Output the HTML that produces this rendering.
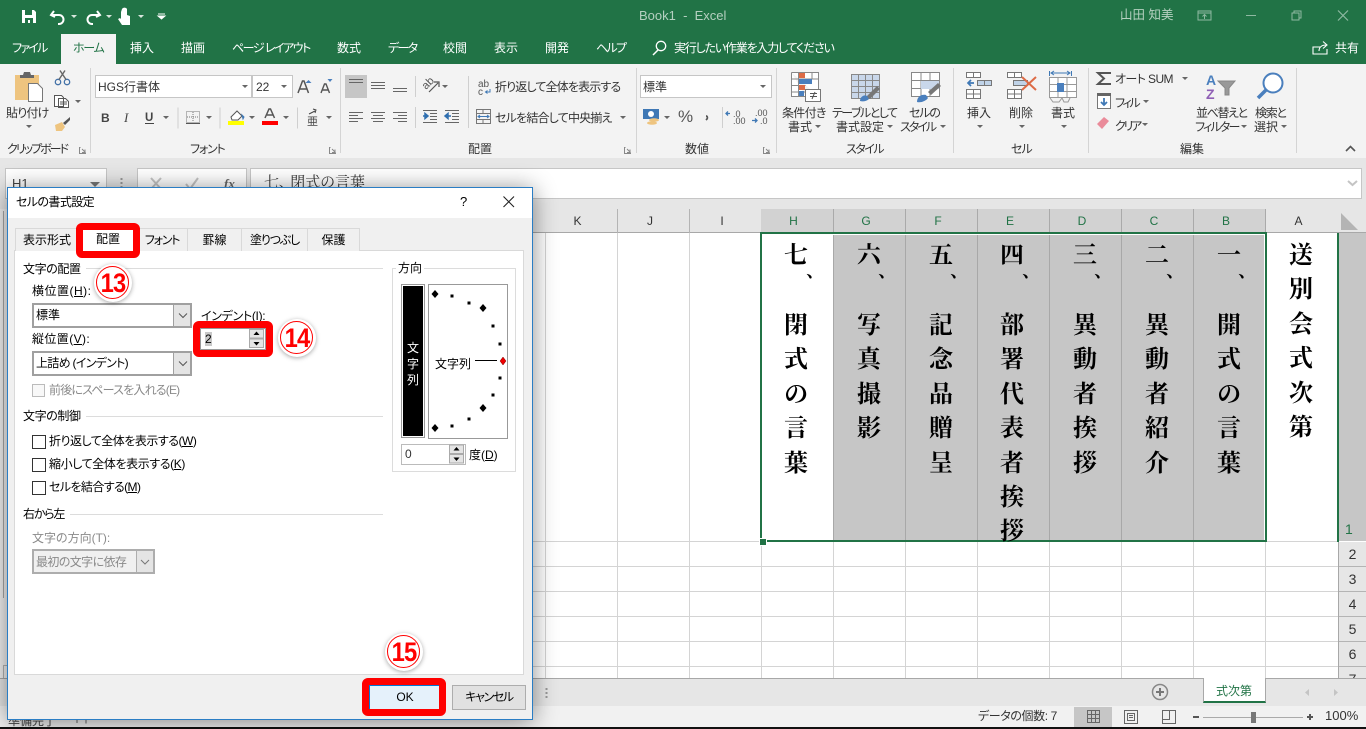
<!DOCTYPE html>
<html lang="ja"><head><meta charset="utf-8"><title>Book1 - Excel</title>
<style>
html,body{margin:0;padding:0;width:1366px;height:729px;overflow:hidden;background:#fff}
body{position:relative;font-family:"Liberation Sans","Noto Sans CJK JP",sans-serif;font-size:12px;color:#333;font-feature-settings:"palt"}
.a{position:absolute}
.t{position:absolute;white-space:nowrap;height:16px;line-height:16px;font-size:12px}
.w{color:#fff}.f{color:#b5d0c0}
.c{position:absolute;width:34px;text-align:center;font-family:"Noto Serif CJK SC","Noto Serif CJK JP",serif;font-weight:700;font-size:24px;line-height:34.4px;color:#000;white-space:pre}
.k{font-size:18px;top:253px}
.hd{position:absolute;top:209px;height:24px;line-height:24px;text-align:center;font-size:12px;color:#333;border-right:1px solid #b4b4b4;box-sizing:border-box;padding-right:7px}
.s{background:#d2d2d2;color:#217346;border-right-color:#aaa}
.rh{position:absolute;left:1339px;width:27px;height:24px;line-height:24px;text-align:center;font-size:14px;color:#333;background:#e6e6e6;border-bottom:1px solid #b4b4b4}
.d{color:#000}
.g{color:#8a8a8a}
.tab{position:absolute;top:228px;height:23px;line-height:23px;text-align:center;background:#f0f0f0;border:1px solid #d9d9d9;border-bottom:0;box-sizing:border-box;color:#000}
.ln{position:absolute;height:1px;background:#dcdcdc}
.sel{position:absolute;box-sizing:border-box;border:2px solid #a0a0a0;background:#fff}
.sb{position:absolute;top:0;right:0;bottom:0;width:16px;background:#e4e4e4;border-left:1px solid #a0a0a0}
.cb{position:absolute;width:12px;height:12px;border:1px solid #333;background:#fff}
.red{position:absolute;box-sizing:border-box;border:7px solid #f00;border-radius:6px}
.num{position:absolute;width:38px;height:38px;border-radius:50%;background:#fff;box-shadow:0 1px 5px rgba(0,0,0,.35)}
.num i{position:absolute;left:2px;top:2px;width:31px;height:31px;border:1.500px solid #f00;border-radius:50%;background:#fff;display:block}
.num b{position:absolute;left:0;top:0;width:38px;height:38px;line-height:38px;text-align:center;font-size:27px;color:#f00;font-style:normal;transform:scaleX(.88);letter-spacing:-1px}
</style></head><body>

<!-- Title + tabs -->
<div class="a" style="left:0;top:0;width:1366px;height:64px;background:#217346"></div>
<div class="a" style="left:61px;top:34px;width:55px;height:30px;background:#f3f3f3"></div>
<div class="a" style="left:0;top:64px;width:1366px;height:94px;background:#f3f3f3;border-bottom:1px solid #cfcfcf"></div>
<div class="a" style="left:0;top:158px;width:1366px;height:51px;background:#e6e6e6"></div>

<span class="t f" style="left:639px;top:8px;font-size:13px">Book1 &nbsp;-&nbsp; Excel</span>
<span class="t f" style="left:1120px;top:7px;font-size:12.500px">山田 知美</span>

<span class="t w" style="left:12px;top:40px;letter-spacing:-1.750px">ファイル</span>
<span class="t" style="left:73px;top:40px;color:#217346;letter-spacing:-1.300px">ホーム</span>
<span class="t w" style="left:130px;top:40px">挿入</span>
<span class="t w" style="left:181px;top:40px">描画</span>
<span class="t w" style="left:232px;top:40px;letter-spacing:-1.500px">ページ レイアウト</span>
<span class="t w" style="left:337px;top:40px">数式</span>
<span class="t w" style="left:388px;top:40px;letter-spacing:-1.700px">データ</span>
<span class="t w" style="left:443px;top:40px">校閲</span>
<span class="t w" style="left:494px;top:40px">表示</span>
<span class="t w" style="left:545px;top:40px">開発</span>
<span class="t w" style="left:596px;top:40px;letter-spacing:-1.700px">ヘルプ</span>
<span class="t w" style="left:674px;top:40px;letter-spacing:-1.200px">実行したい作業を入力してください</span>
<span class="t w" style="left:1335px;top:40px">共有</span>

<!-- Ribbon text -->
<span class="t" style="left:6px;top:105px;letter-spacing:-.800px">貼り付け</span>
<span class="t" style="left:7px;top:141px;letter-spacing:-2px">クリップボード</span>
<span class="t" style="left:190px;top:141px;letter-spacing:-1.200px">フォント</span>
<span class="t" style="left:468px;top:141px">配置</span>
<span class="t" style="left:685px;top:141px">数値</span>
<span class="t" style="left:846px;top:141px;letter-spacing:-1.500px">スタイル</span>
<span class="t" style="left:1011px;top:141px;letter-spacing:-1px">セル</span>
<span class="t" style="left:1180px;top:141px">編集</span>

<div class="a" style="left:95px;top:75px;width:155px;height:21px;background:#fff;border:1px solid #c6c6c6"></div>
<div class="a" style="left:252px;top:75px;width:39px;height:21px;background:#fff;border:1px solid #c6c6c6"></div>
<div class="a" style="left:640px;top:75px;width:130px;height:21px;background:#fff;border:1px solid #c6c6c6"></div>
<div class="a" style="left:345px;top:75px;width:22px;height:23px;background:#c6c6c6"></div>
<span class="t" style="left:98px;top:79px">HGS行書体</span>
<span class="t" style="left:256px;top:79px">22</span>
<span class="t" style="left:643px;top:79px">標準</span>
<span class="t" style="left:495px;top:79px;letter-spacing:-.850px">折り返して全体を表示する</span>
<span class="t" style="left:495px;top:110px;letter-spacing:-.800px">セルを結合して中央揃え</span>
<span class="t" style="left:782px;top:105px;letter-spacing:-.700px">条件付き</span>
<span class="t" style="left:788px;top:119px">書式</span>
<span class="t" style="left:832px;top:105px;letter-spacing:-1.500px">テーブルとして</span>
<span class="t" style="left:836px;top:119px">書式設定</span>
<span class="t" style="left:909px;top:105px;letter-spacing:-1.200px">セルの</span>
<span class="t" style="left:900px;top:119px;letter-spacing:-2px">スタイル</span>
<span class="t" style="left:967px;top:105px">挿入</span>
<span class="t" style="left:1009px;top:105px">削除</span>
<span class="t" style="left:1051px;top:105px">書式</span>
<span class="t" style="left:1115px;top:71px;letter-spacing:-.600px">オート SUM</span>
<span class="t" style="left:1115px;top:95px;letter-spacing:-2.300px">フィル</span>
<span class="t" style="left:1115px;top:118px;letter-spacing:-2.300px">クリア</span>
<span class="t" style="left:1196px;top:105px;letter-spacing:-1.400px">並べ替えと</span>
<span class="t" style="left:1195px;top:119px;letter-spacing:-1.800px">フィルター</span>
<span class="t" style="left:1255px;top:105px;letter-spacing:-1.300px">検索と</span>
<span class="t" style="left:1254px;top:119px">選択</span>
<span class="t" style="left:678px;top:109px;font-size:17px;color:#555;font-weight:400">%</span>

<!-- Ribbon icons -->
<svg class="a" style="left:0;top:0" width="1366" height="160" viewBox="0 0 1366 160" fill="none">
<!-- QAT -->
<path d="M22 10h12l2 2v11H22z" fill="#fff"/><path d="M25 10h7v5h-7zM25 18h8v5h-8z" fill="#217346"/><rect x="28" y="20" width="2" height="3" fill="#fff"/>
<path d="M54 11l-3 4 4 2M52 15h7a4.500 4.500 0 0 1 0 9h-1" stroke="#fff" stroke-width="2"/>
<path d="M97 11l3 4-4 2M99 15h-7a4.500 4.500 0 0 0 0 9h1" stroke="#fff" stroke-width="2"/>
<path d="M122 9a3 3 0 0 1 5 0l0 6 3 1 0 0 0 9h-8l-4-6 2-1 1 1v-7zM122 9" fill="#fff"/>
<path d="M71 15h6l-3 3zM106 15h6l-3 3zM138 15h6l-3 3z" fill="#d8e6dd"/>
<path d="M158 14h7M158 16h7l-3.500 3z" stroke="#fff" fill="#fff" stroke-width="1"/>
<!-- window icons -->
<path d="M1198 11h13v9h-13zM1198 13h13M1204.500 19v-4M1202.500 16.500l2-2 2 2" stroke="#8fb9a2"/>
<path d="M1246 15.500h10" stroke="#8fb9a2"/>
<path d="M1292 13h7v7h-7zM1294 13v-2h7v7h-2" stroke="#8fb9a2"/>
<path d="M1338 10.500l10 10M1348 10.500l-10 10" stroke="#8fb9a2" stroke-width="1.200"/>
<!-- search + share -->
<circle cx="661" cy="46" r="4.700" stroke="#fff" stroke-width="1.300"/><path d="M658 50l-5 5" stroke="#fff" stroke-width="1.500"/>
<path d="M1320 47h-7v7h14v-5M1319 51c0-4 3-6 7-6M1323 41.500l4 3.500-4 3.500" stroke="#fff" stroke-width="1.100"/>
<!-- dividers -->
<path d="M90.500 68v85M340.500 68v85M636.500 68v85M776.500 68v85M953.500 68v85M1088.500 68v85M1296.500 68v85" stroke="#d4d4d4"/>
<path d="M178 107.500v21M220 107.500v21M297.500 107.500v21M415.500 76v21M415.500 107v21M468.500 76v52M722.500 107v21" stroke="#cfcfcf"/>
<!-- carets -->
<path d="M26 125h6l-3 3zM75 100h6l-3 3zM242 85h6l-3 3zM281 85h6l-3 3zM163 116h6l-3 3zM206 116h6l-3 3zM249 116h6l-3 3zM283 116h6l-3 3zM326 116h6l-3 3zM442 85h6l-3 3zM620 116h6l-3 3zM760 85h6l-3 3zM664 116h6l-3 3zM815 125h6l-3 3zM887 125h6l-3 3zM940 125h6l-3 3zM977 125h6l-3 3zM1019 125h6l-3 3zM1061 125h6l-3 3zM1182 77h6l-3 3zM1143 100h6l-3 3zM1142 123h6l-3 3zM1241 125h6l-3 3zM1281 125h6l-3 3z" fill="#666"/>
<!-- launchers -->
<path d="M80.500 147.500h-1v6h6v-1M82 149l3 3M85 149.500v3h-3" stroke="#888"/>
<path d="M330.500 147.500h-1v6h6v-1M332 149l3 3M335 149.500v3h-3" stroke="#888"/>
<path d="M625.500 147.500h-1v6h6v-1M627 149l3 3M630 149.500v3h-3" stroke="#888"/>
<path d="M764.500 147.500h-1v6h6v-1M766 149l3 3M769 149.500v3h-3" stroke="#888"/>
<path d="M1346 151l4.500-4.500 4.500 4.500" stroke="#555" stroke-width="1.600"/>
<!-- clipboard -->
<rect x="15" y="75" width="24" height="25" fill="#eec47f"/><path d="M20 78v-3h3l1-3h6l1 3h3v3z" fill="#666"/>
<path d="M28.500 83.500h9l5 5v13h-14z" fill="#fff" stroke="#777"/>
<circle cx="58" cy="82" r="2.700" stroke="#4472a8" stroke-width="1.300"/><circle cx="67" cy="82" r="2.700" stroke="#4472a8" stroke-width="1.300"/><path d="M59 79.500l6-9M66 79.500l-6-9" stroke="#666" stroke-width="1.400"/>
<path d="M54.500 95.500h7l2 2v9h-9zM58.500 98.500h7l3 3v6h-10zM60 102h7M60 104h7" stroke="#555" fill="#fff"/>
<path d="M63 123l7-6 0 3-5 5z" fill="#555"/><path d="M55 125l7-3 3 5-3 4h-6z" fill="#eec47f"/>
<!-- font -->
<path d="M298 93l4.500-12h1.500l4.500 12M300 89h7" stroke="#555" stroke-width="1.500"/><path d="M305.500 83l3-3 3 3z" fill="#4a7fbd"/>
<path d="M321 93l3.500-9h1.500l3.500 9M322.500 90h5.500" stroke="#555" stroke-width="1.400"/><path d="M327.500 79h5l-2.500 3z" fill="#4a7fbd"/>
<text x="101" y="122" font-family="Liberation Sans" font-size="12" font-weight="700" fill="#444">B</text>
<text x="124" y="122" font-family="Liberation Serif" font-size="13" font-style="italic" fill="#444">I</text>
<text x="145" y="121" font-family="Liberation Sans" font-size="11.500" font-weight="700" fill="#444">U</text><path d="M145 123.500h9" stroke="#444"/>
<path d="M186.500 111.500h13v11h-13zM193 112v10M187 117h12" stroke="#777" stroke-dasharray="1 1"/><path d="M186 123.500h14" stroke="#555"/>
<path d="M231 117l6-6 5 5-4 4h-6z" fill="#fff" stroke="#555"/><path d="M242 115l2 2-1 2z" fill="#3f78b5" stroke="#3f78b5"/><rect x="228" y="121" width="16" height="4" fill="#ff0"/>
<path d="M265 118l4-9h1.500l4 9M267 115h6" stroke="#555" stroke-width="1.500"/><rect x="262" y="121" width="16" height="4" fill="#f00"/>
<path d="M309 114l6-3M313 109l3 1-1 3" stroke="#444"/><text x="307" y="125" font-family="Liberation Sans,Noto Sans CJK JP,sans-serif" font-size="11" fill="#444">亜</text>
<!-- align -->
<path d="M349 79.500h14M349 82.500h14M371 82.500h14M371 85.500h14M371 88.500h14M393 88.500h14M393 91.500h14" stroke="#666" stroke-width="1.100"/>
<path d="M349 112.500h14M349 115.500h9M349 118.500h14M349 121.500h9M371 112.500h14M373 115.500h10M371 118.500h14M373 121.500h10M393 112.500h14M398 115.500h9M393 118.500h14M398 121.500h9" stroke="#666" stroke-width="1.100"/>
<text x="0" y="0" transform="translate(426,90) rotate(-45)" font-family="Liberation Sans" font-size="11" fill="#555">ab</text><path d="M429 92l9-9M439 87v-5h-5" stroke="#555" stroke-width="1.200"/>
<path d="M423 110.500h14M430 113.500h7M430 116.500h7M430 119.500h7M423 122.500h14M445 110.500h14M452 113.500h7M452 116.500h7M452 119.500h7M445 122.500h14" stroke="#666" stroke-width="1.100"/>
<path d="M423 116h4M425 113.500l3 2.500-3 2.500z" stroke="#2f6fb0" fill="#2f6fb0" stroke-width="1.500"/><path d="M451 116h-5M448 113.500l-3 2.500 3 2.500z" stroke="#2f6fb0" fill="#2f6fb0" stroke-width="1.500"/>
<text x="478" y="87" font-family="Liberation Sans" font-size="10" fill="#555">ab</text><text x="478" y="95" font-family="Liberation Sans" font-size="10" fill="#555">c</text><path d="M490 89v3h-4M487.500 90.500l-2 1.500 2 1.500" stroke="#3f78b5"/>
<path d="M476.500 109.500h14v14h-14zM476.500 113.500h14M476.500 119.500h14M483 109.500v4M483 119.500v4" stroke="#777"/><path d="M479 116.500h9M480 115l-2 1.500 2 1.500M487 115l2 1.500-2 1.500" stroke="#3f78b5"/>
<!-- number -->
<rect x="643" y="109" width="16" height="10" fill="#3f78b5"/><circle cx="651" cy="114" r="3" fill="#fff"/><ellipse cx="654" cy="120" rx="5" ry="1.800" fill="#eec47f"/><ellipse cx="652" cy="123" rx="5" ry="1.800" fill="#eec47f"/>
<path d="M706 116c1 0 2 1 1 3l-1 1" stroke="#555" stroke-width="1.700"/>
<text x="733" y="117" font-family="Liberation Sans" font-size="9" fill="#555">.0</text><text x="733" y="124" font-family="Liberation Sans" font-size="9" fill="#555">.00</text><path d="M730 113.500h-4M728 111.500l-2 2 2 2" stroke="#3f78b5" stroke-width="1.300"/>
<text x="755" y="116" font-family="Liberation Sans" font-size="9" fill="#555">.00</text><text x="760" y="124" font-family="Liberation Sans" font-size="9" fill="#555">.0</text><path d="M752 120.500h5M755 118.500l2 2-2 2" stroke="#3f78b5" stroke-width="1.300"/>
<!-- conditional -->
<path d="M791.500 72.500h27v24M791.500 72.500v24h14M791.500 79h27M791.500 85.500h14M791.500 92h14M798.500 72.500v24M812 72.500v6" stroke="#888" fill="#fff"/>
<rect x="799" y="73" width="6" height="5" fill="#dd6b46"/><rect x="799" y="79" width="13" height="5" fill="#4a7fbd"/><rect x="799" y="85" width="6" height="5" fill="#dd6b46"/><rect x="799" y="91" width="5" height="5" fill="#4a7fbd"/>
<rect x="805.500" y="89.500" width="15" height="12" fill="#fff" stroke="#777"/><path d="M810 93.500h7M810 96.500h7M815 92l-3 7" stroke="#555"/>
<!-- table style -->
<path d="M851.500 74.500h28v24h-28zM851.500 80.500h28M851.500 86.500h28M851.500 92.500h28M858.500 74.500v24M865.500 74.500v24M872.500 74.500v24" stroke="#888" fill="#c9d7ea"/>
<path d="M866 97l11-11 3 3-10 10z" fill="#777"/><path d="M860 101c0-4 4-7 7-5l2 3c-2 2-6 3-9 2z" fill="#4a7fbd"/>
<!-- cell style -->
<path d="M911.500 72.500h28v24h-28zM911.500 80.500h28M911.500 88.500h28M921 72.500v24M930 72.500v24" stroke="#888" fill="#fff"/><rect x="921" y="81" width="18" height="8" fill="#c9d7ea"/>
<path d="M928 92l10-9 3 3-10 9z" fill="#777"/><path d="M917 102c0-5 4-8 9-7l2 3c-2 3-7 5-11 4z" fill="#4a7fbd"/>
<!-- insert -->
<path d="M966.500 72.500h14v5h-14zM973.500 72.500v5M966.500 89.500h14v9h-14zM966.500 94h14M973.500 89.500v9" stroke="#777" fill="#fff"/>
<path d="M977.500 80.500h14v5h-14zM984.500 80.500v5" stroke="#777" fill="#c0d3e8"/><path d="M974 83h-6M971 80l-3 3 3 3" stroke="#3f78b5" stroke-width="1.700"/>
<!-- delete -->
<path d="M1007.500 72.500h14v5h-14zM1014.500 72.500v5M1007.500 89.500h14v9h-14zM1007.500 94h14M1014.500 89.500v9" stroke="#777" fill="#fff"/>
<path d="M1013.500 80.500h14v5h-14z" stroke="#777" fill="#c0d3e8"/><path d="M1022 77l14 13M1036 77l-14 13" stroke="#dd6b46" stroke-width="2"/>
<!-- format -->
<path d="M1049.500 71v5M1071.500 71v5M1051 73h19M1054 71l-3 2 3 2M1067 71l3 2-3 2" stroke="#3f78b5"/>
<path d="M1049.500 77.500h27v20h-27zM1049.500 84.500h27M1049.500 91.500h27M1058 77.500v20M1067 77.500v20" stroke="#999" fill="#fff"/><rect x="1057" y="83" width="7" height="9" fill="#4a7fbd"/>
<path d="M1050 98l3 4h6l3-4M1062 98l2 4h4l2-4" stroke="#999"/>
<!-- edit -->
<path d="M1111 73h-13l6 5.500-6 5.500h13" stroke="#555" stroke-width="2"/>
<rect x="1097.500" y="93.500" width="13" height="15" fill="#fff" stroke="#777"/><rect x="1097" y="93" width="14" height="3" fill="#666"/><path d="M1104 98v6M1101 102l3 3 3-3" stroke="#3f78b5" stroke-width="1.800"/>
<path d="M1097 124l7-7 5 4-7 8z" fill="#ea8b9a"/>
<text x="1206" y="85" font-family="Liberation Sans" font-size="14" font-weight="700" fill="#4a7fbd">A</text><text x="1206" y="99" font-family="Liberation Sans" font-size="14" font-weight="700" fill="#8f5fb5">Z</text>
<path d="M1218 81h17l-6 7v7l-4 0v-7z" stroke="#888" fill="#999"/>
<circle cx="1273" cy="83" r="9.500" stroke="#4a7fbd" stroke-width="2" fill="#fff"/><path d="M1266 90l-8 8" stroke="#4a7fbd" stroke-width="3.500"/>
</svg>

<!-- Formula bar -->
<div class="a" style="left:5px;top:168px;width:100px;height:29px;background:#fff;border:1px solid #c6c6c6"></div>
<div class="a" style="left:137px;top:168px;width:108px;height:29px;background:#fff;border:1px solid #c6c6c6"></div>
<div class="a" style="left:250px;top:168px;width:1110px;height:29px;background:#fff;border:1px solid #c6c6c6"></div>
<span class="t" style="left:12px;top:176px;font-size:13px;color:#444">H1</span>
<span class="t" style="left:264px;top:175px;font-size:15px;font-family:'Liberation Serif','Noto Serif CJK SC',serif;color:#333">七、 閉式の言葉</span>
<svg class="a" style="left:0;top:160px" width="1366" height="40" fill="none">
<path d="M90 22h10l-5 5z" fill="#777"/><path d="M121.500 18v16" stroke="#999" stroke-dasharray="2 2" stroke-width="2"/>
<path d="M151 18l10 11M161 18l-10 11M186 24l4 5 8-11" stroke="#c4c4c4" stroke-width="2"/>
<text x="224" y="28" font-family="Liberation Serif" font-size="13" font-style="italic" font-weight="700" fill="#666">fx</text>
<path d="M1348 21l4.500 4 4.500-4" stroke="#c4c4c4" stroke-width="2"/>
</svg>

<!-- Column headers -->
<div class="a" style="left:0;top:209px;width:1366px;height:24px;background:#e6e6e6;border-bottom:1px solid #a8a8a8;box-sizing:border-box"></div>
<div class="hd" style="left:545px;width:73px">K</div>
<div class="hd" style="left:618px;width:72px">J</div>
<div class="hd" style="left:690px;width:72px">I</div>
<div class="hd s" style="left:761px;width:73px">H</div>
<div class="hd s" style="left:834px;width:72px">G</div>
<div class="hd s" style="left:906px;width:72px">F</div>
<div class="hd s" style="left:978px;width:72px">E</div>
<div class="hd s" style="left:1050px;width:72px">D</div>
<div class="hd s" style="left:1122px;width:72px">C</div>
<div class="hd s" style="left:1194px;width:72px">B</div>
<div class="hd" style="left:1266px;width:72px;border-right:0">A</div>
<svg class="a" style="left:1338px;top:209px" width="28" height="24"><path d="M3 4v17h17z" fill="#b4b4b4"/></svg>

<!-- Grid -->
<svg class="a" style="left:0;top:233px" width="1338" height="446" fill="none">
<path d="M545.500 0v445M617.500 0v445M689.500 0v445M761.500 308v137M833.500 308v137M905.500 308v137M977.500 308v137M1049.500 308v137M1121.500 308v137M1193.500 308v137M1265.500 308v137" stroke="#d4d4d4"/>
<path d="M0 308.500h1338M0 333.500h1338M0 358.500h1338M0 383.500h1338M0 408.500h1338M0 433.500h1338" stroke="#d4d4d4"/>
</svg>
<div class="a" style="left:0;top:209px;width:8px;height:469px;background:#f0f0f0"></div>
<div class="a" style="left:3px;top:211px;width:1px;height:387px;background:#a8a8a8"></div>
<div class="a" style="left:3px;top:665px;width:5px;height:14px;border:1px solid #b4b4b4;box-sizing:border-box"></div>
<div class="a" style="left:834px;top:235px;width:430px;height:305px;background:#c6c6c6"></div>
<svg class="a" style="left:0;top:235px" width="1366" height="306" fill="none"><path d="M833.500 0v305M905.500 0v305M977.500 0v305M1049.500 0v305M1121.500 0v305M1193.500 0v305" stroke="#a8a8a8"/></svg>
<div class="a" style="left:760px;top:232px;width:503px;height:306px;border:2px solid #217346"></div>
<div class="a" style="left:759px;top:538px;width:6px;height:6px;background:#217346;border:1px solid #fff"></div>

<!-- Sheet text -->
<div class="c" style="left:779px;top:236px">七</div><div class="c k" style="left:794px">、</div><div class="c" style="left:779px;top:306px">閉
式
の
言
葉</div>
<div class="c" style="left:852px;top:236px">六</div><div class="c k" style="left:866px">、</div><div class="c" style="left:852px;top:306px">写
真
撮
影</div>
<div class="c" style="left:924px;top:236px">五</div><div class="c k" style="left:938px">、</div><div class="c" style="left:924px;top:306px">記
念
品
贈
呈</div>
<div class="c" style="left:995px;top:236px">四</div><div class="c k" style="left:1010px">、</div><div class="c" style="left:995px;top:306px">部
署
代
表
者
挨
拶</div>
<div class="c" style="left:1068px;top:236px">三</div><div class="c k" style="left:1082px">、</div><div class="c" style="left:1068px;top:306px">異
動
者
挨
拶</div>
<div class="c" style="left:1140px;top:236px">二</div><div class="c k" style="left:1154px">、</div><div class="c" style="left:1140px;top:306px">異
動
者
紹
介</div>
<div class="c" style="left:1212px;top:236px">一</div><div class="c k" style="left:1226px">、</div><div class="c" style="left:1212px;top:306px">開
式
の
言
葉</div>
<div class="c" style="left:1284px;top:236px">送
別
会
式
次
第</div>

<!-- Row headers -->
<div class="a" style="left:1337px;top:233px;width:2px;height:309px;background:#217346"></div>
<div class="a" style="left:1339px;top:233px;width:27px;height:308px;background:#c6c6c6"></div>
<span class="t" style="left:1345px;top:521px;font-size:14px;color:#217346">1</span>
<div class="a" style="left:1338px;top:542px;width:1px;height:136px;background:#a8a8a8"></div>
<div class="rh" style="top:542px">2</div><div class="rh" style="top:567px">3</div><div class="rh" style="top:592px">4</div><div class="rh" style="top:617px">5</div><div class="rh" style="top:642px">6</div><div class="rh" style="top:667px;height:11px;overflow:hidden;border:0">7</div>

<!-- Sheet tab bar and status bar -->
<div class="a" style="left:0;top:678px;width:1366px;height:28px;background:#e6e6e6;border-top:1px solid #a8a8a8;box-sizing:border-box"></div>
<div class="a" style="left:0;top:706px;width:1366px;height:21px;background:#f1f1f1"></div>
<div class="a" style="left:0;top:727px;width:1366px;height:2px;background:#111"></div>
<div class="a" style="left:1074px;top:707px;width:38px;height:20px;background:#c6c6c6"></div>
<div class="a" style="left:1203px;top:678px;width:61px;height:23px;background:#fff;border-bottom:2px solid #217346;border-left:1px solid #a8a8a8;border-right:1px solid #a8a8a8"></div>
<span class="t" style="left:1216px;top:683px;color:#217346">式次第</span>
<span class="t" style="left:978px;top:708px;letter-spacing:-.400px">データの個数: 7</span>
<span class="t" style="left:1325px;top:708px;font-size:13px">100%</span>
<svg class="a" style="left:0;top:678px" width="1366" height="50" fill="none">
<circle cx="1160" cy="14" r="7.500" stroke="#888" stroke-width="1.500"/><path d="M1156 14h8M1160 10v8" stroke="#777" stroke-width="2"/>
<path d="M1309 11l-4 3.500 4 3.500zM1334 11l4 3.500-4 3.500z" fill="#c4c4c4"/>
<path d="M546.500 10v10" stroke="#999" stroke-width="2" stroke-dasharray="2 2"/>
<path d="M1087.500 32.500h12v12h-12zM1091.500 32.500v12M1095.500 32.500v12M1087.500 36.500h12M1087.500 40.500h12" stroke="#666"/>
<path d="M1124.500 32.500h13v13h-13zM1127.500 35.500h7v7h-7zM1129 37.500h4M1129 39.500h4" stroke="#666"/>
<path d="M1162.500 32.500h13v13h-13zM1162.500 41.500h7v-9" stroke="#666"/>
<path d="M1193 39h6M1307 39h6M1310 36v6" stroke="#555" stroke-width="2"/>
<path d="M1203 39.500h100" stroke="#aaa"/><rect x="1251" y="34" width="5" height="11" fill="#777"/>
<path d="M77 39.500h9v6M77 45v-5.500" stroke="#666"/>
</svg>
<span class="t" style="left:8px;top:713px;color:#444">準備完了</span>

<!-- Dialog -->
<div class="a" style="left:7px;top:187px;width:524px;height:531px;background:#f0f0f0;border:1px solid #2a7dc4;box-shadow:0 2px 22px rgba(0,0,0,.45)"></div>
<div class="a" style="left:8px;top:188px;width:524px;height:30px;background:#fff"></div>
<span class="t d" style="left:16px;top:194px;letter-spacing:-.600px">セルの書式設定</span>
<span class="t d" style="left:460px;top:194px;font-size:13px">?</span>
<svg class="a" style="left:502px;top:195px" width="14" height="14" fill="none"><path d="M1.500 1.500l10.500 10.500M12 1.500L1.500 12" stroke="#222" stroke-width="1.100"/></svg>

<div class="a" style="left:14px;top:250px;width:508px;height:423px;background:#fff;border:1px solid #d9d9d9"></div>
<div class="tab" style="left:15px;width:64px">表示形式</div>
<div class="tab" style="left:136px;width:52px;letter-spacing:-1.200px">フォント</div>
<div class="tab" style="left:187px;width:55px">罫線</div>
<div class="tab" style="left:241px;width:67px;letter-spacing:-1.200px">塗りつぶし</div>
<div class="tab" style="left:307px;width:53px">保護</div>
<div class="tab" style="left:78px;top:224px;width:60px;height:28px;background:#fff;line-height:30px;border:0">配置</div>
<div class="red" style="left:76px;top:223px;width:64px;height:35px"></div>

<span class="t d" style="left:23px;top:261px;letter-spacing:-.400px">文字の配置</span><div class="ln" style="left:86px;top:268px;width:297px"></div>
<span class="t d" style="left:32px;top:283px;letter-spacing:.500px">横位置(<u>H</u>):</span>
<div class="sel" style="left:32px;top:303px;width:160px;height:25px"><div class="sb"></div></div>
<span class="t d" style="left:36px;top:307px">標準</span>
<span class="t d" style="left:32px;top:331px;letter-spacing:.400px">縦位置(<u>V</u>):</span>
<div class="sel" style="left:32px;top:351px;width:160px;height:25px"><div class="sb"></div></div>
<span class="t d" style="left:36px;top:355px;letter-spacing:-.700px">上詰め (インデント)</span>
<div class="a" style="left:32px;top:384px;width:11px;height:11px;border:1px solid #bbb;background:#f8f8f8"></div>
<span class="t g" style="left:49px;top:382px;letter-spacing:-.800px">前後にスペースを入れる(E)</span>
<span class="t d" style="left:23px;top:408px;letter-spacing:-.400px">文字の制御</span><div class="ln" style="left:86px;top:416px;width:297px"></div>
<div class="cb" style="left:32px;top:435px"></div><span class="t d" style="left:49px;top:433px;letter-spacing:-.500px">折り返して全体を表示する(<u>W</u>)</span>
<div class="cb" style="left:32px;top:458px"></div><span class="t d" style="left:49px;top:456px;letter-spacing:-.400px">縮小して全体を表示する(<u>K</u>)</span>
<div class="cb" style="left:32px;top:481px"></div><span class="t d" style="left:49px;top:479px;letter-spacing:-.600px">セルを結合する(<u>M</u>)</span>
<span class="t d" style="left:23px;top:506px;letter-spacing:-1.200px">右から左</span><div class="ln" style="left:70px;top:514px;width:313px"></div>
<span class="t g" style="left:32px;top:530px">文字の方向(T):</span>
<div class="sel" style="left:32px;top:549px;width:123px;height:25px;background:#f0f0f0;border-color:#adadad"><div class="sb" style="background:#e4e4e4;border-left-color:#adadad"></div></div>
<span class="t g" style="left:36px;top:554px;letter-spacing:-.600px">最初の文字に依存</span>
<span class="t d" style="left:201px;top:308px;letter-spacing:-.300px">インデント(I):</span>
<div class="a" style="left:200px;top:328px;width:64px;height:20px;background:#fff;border:1px solid #999"></div>
<div class="a" style="left:205px;top:332px;width:7px;height:14px;background:#c8c8c8"></div>
<span class="t d" style="left:205px;top:331px">2</span>
<div class="red" style="left:193px;top:321px;width:80px;height:36px;background:transparent"></div>

<!-- Orientation group -->
<div class="a" style="left:392px;top:268px;width:122px;height:202px;border:1px solid #dcdcdc"></div>
<div class="a" style="left:396px;top:260px;padding:0 2px;background:#fff;height:16px;line-height:16px;color:#000">方向</div>
<div class="a" style="left:401px;top:284px;width:20px;height:150px;background:#000;border:2px solid #fff;outline:1px solid #999;outline-offset:-1px"></div>
<div class="a" style="left:405px;top:340px;width:16px;color:#fff;line-height:16px;text-align:center">文<br>字<br>列</div>
<div class="a" style="left:428px;top:284px;width:78px;height:153px;border:1px solid #999;background:#fff"></div>
<svg class="a" style="left:428px;top:284px" width="82" height="156">
<path d="M7 6l3.500 4-3.500 4-3.500-4zM55 20l3.500 4-3.500 4-3.500-4zM7 140l3.500 4-3.500 4-3.500-4zM55 120l3.500 4-3.500 4-3.500-4z" fill="#000"/>
<path d="M23 11h2v2h-2zM40 18h2v2h-2zM64 41h2v2h-2zM71 59h2v2h-2zM71 93h2v2h-2zM64 110h2v2h-2zM40 134h2v2h-2zM23 141h2v2h-2z" fill="#000" stroke="#000"/>
<path d="M47 76.500h22" stroke="#000"/><path d="M75 73l3 4-3 4-3-4z" fill="#e00" stroke="#700" stroke-width=".5"/>
</svg>
<span class="t d" style="left:435px;top:356px">文字列</span>
<div class="a" style="left:401px;top:444px;width:63px;height:19px;background:#fff;border:1px solid #bbb"></div>
<span class="t d" style="left:405px;top:446px;color:#333">0</span>
<span class="t d" style="left:469px;top:447px">度(<u>D</u>)</span>
<svg class="a" style="left:0;top:0" width="540" height="480" fill="none">
<path d="M179 313.500l4 4 4-4" stroke="#555"/><path d="M179 361.500l4 4 4-4" stroke="#555"/>
<rect x="249.500" y="329.500" width="14" height="8.500" fill="#e4e4e4" stroke="#aaa"/><rect x="249.500" y="339" width="14" height="8.500" fill="#e4e4e4" stroke="#aaa"/>
<path d="M256.500 331.500l3 3.500h-6zM256.500 345.500l3-3.500h-6z" fill="#000"/>
<rect x="449.500" y="445" width="14" height="8.500" fill="#e4e4e4" stroke="#aaa"/><rect x="449.500" y="454.500" width="14" height="8.500" fill="#e4e4e4" stroke="#aaa"/>
<path d="M456.500 447l3 3.500h-6zM456.500 461l3-3.500h-6z" fill="#000"/>
</svg>
<svg class="a" style="left:138px;top:555px" width="16" height="14" fill="none"><path d="M3 5l4 4 4-4" stroke="#777"/></svg>

<!-- Buttons -->
<div class="a" style="left:369px;top:685px;width:70px;height:23px;background:#e5f1fb;border:1px solid #0078d7;text-align:center;line-height:23px;color:#000">OK</div>
<div class="red" style="left:362px;top:678px;width:84px;height:38px"></div>
<div class="a" style="left:452px;top:685px;width:72px;height:23px;background:#e1e1e1;border:1px solid #adadad;text-align:center;line-height:23px;color:#000;letter-spacing:-1.400px">キャンセル</div>

<!-- Circled numbers -->
<div class="num" style="left:94px;top:264px"><i></i><b>13</b></div>
<div class="num" style="left:278px;top:319px"><i></i><b>14</b></div>
<div class="num" style="left:385px;top:633px"><i></i><b>15</b></div>
</body></html>
